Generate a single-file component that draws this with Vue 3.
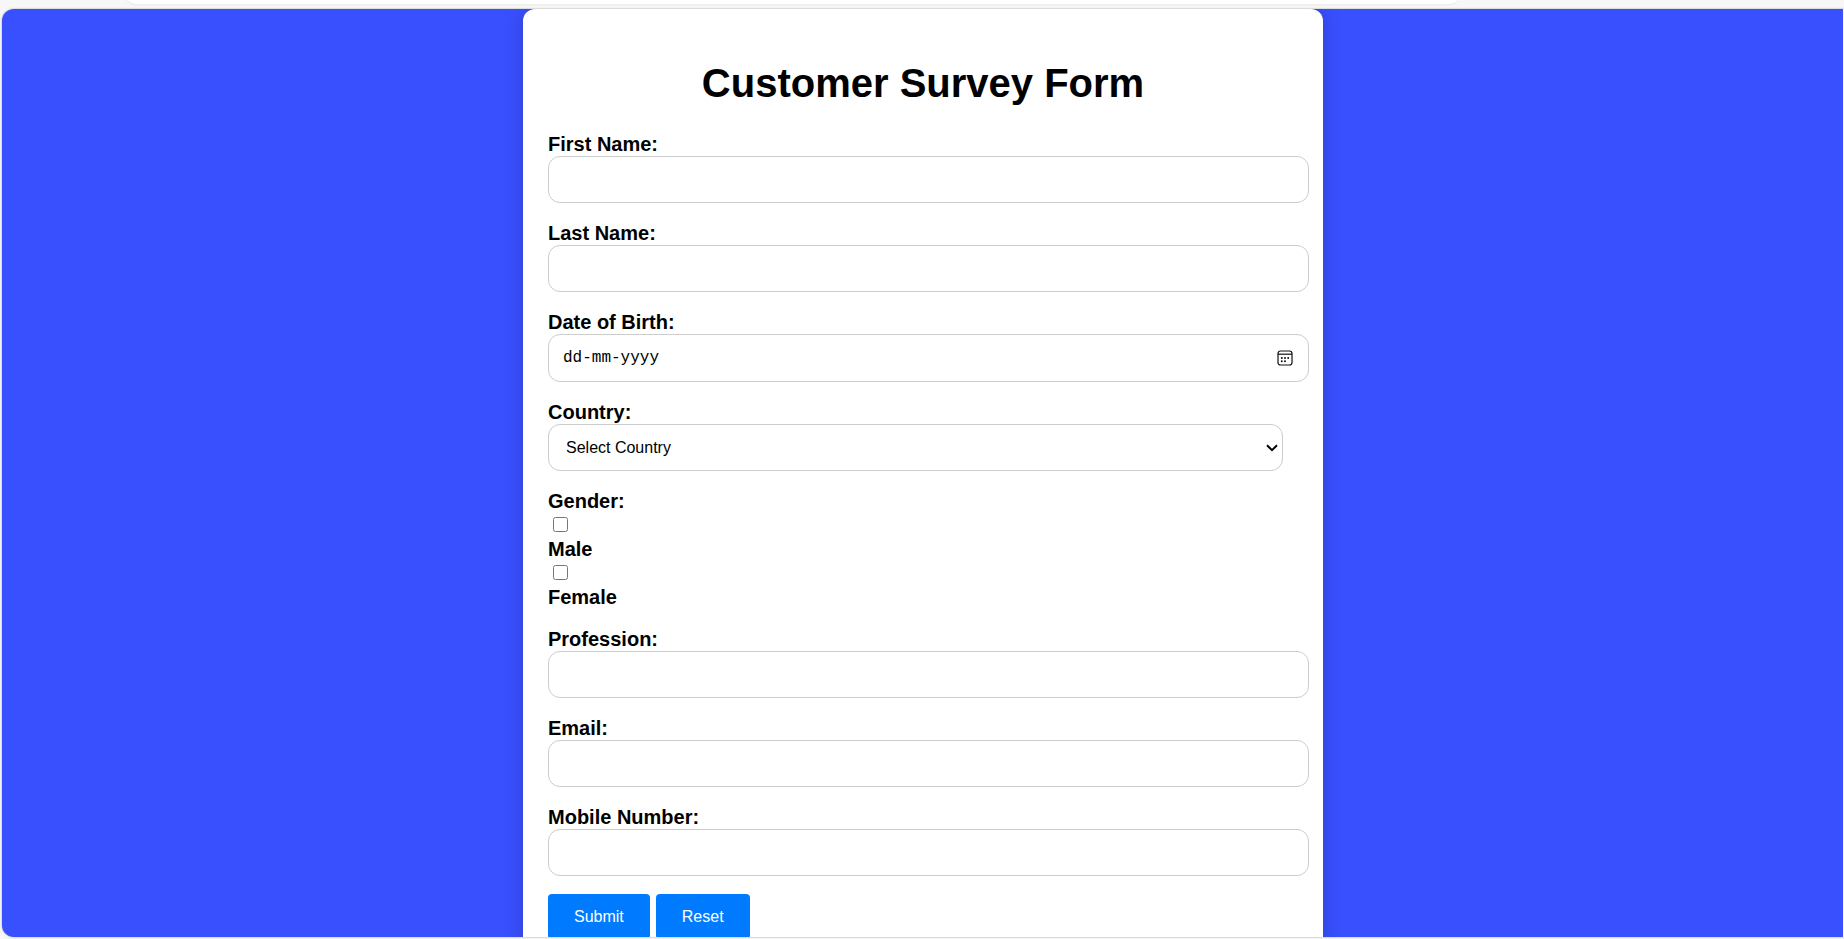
<script setup>
import { reactive } from 'vue'

const form = reactive({
  firstName: '',
  lastName: '',
  birth: '',
  country: '',
  male: false,
  female: false,
  profession: '',
  email: '',
  mobile: '',
})

const nameFields = [
  { key: 'firstName', label: 'First Name:', type: 'text' },
  { key: 'lastName', label: 'Last Name:', type: 'text' },
]
const contactFields = [
  { key: 'profession', label: 'Profession:', type: 'text' },
  { key: 'email', label: 'Email:', type: 'email' },
  { key: 'mobile', label: 'Mobile Number:', type: 'tel' },
]
const countries = ['India', 'United States', 'United Kingdom', 'Canada', 'Australia']

function reset() {
  for (const key in form) form[key] = typeof form[key] === 'boolean' ? false : ''
}
</script>

<template>
  <div class="shell">
    <div class="strip"><div class="bar"></div></div>
    <main class="view">
      <form class="card" @submit.prevent @reset.prevent="reset">
        <h1>Customer Survey Form</h1>

        <div v-for="f in nameFields" :key="f.key" class="field">
          <label :for="f.key">{{ f.label }}</label>
          <input :id="f.key" v-model="form[f.key]" class="box" :type="f.type" />
        </div>

        <div class="field">
          <label for="birth">Date of Birth:</label>
          <div class="date box">
            <input id="birth" v-model="form.birth" type="text" placeholder="dd-mm-yyyy" />
            <button type="button" class="picker" aria-label="Show date picker">
              <svg width="16" height="16" viewBox="0 0 16 16" fill="none" stroke="#111">
                <rect x="1" y="1" width="14" height="14" rx="2.5" stroke-width="1.2" />
                <path d="M1 4.2h14" stroke-width="1.2" />
                <g fill="#111" stroke="none">
                  <circle cx="4.8" cy="8" r="1" />
                  <circle cx="8" cy="8" r="1" />
                  <circle cx="11.2" cy="8" r="1" />
                  <circle cx="4.8" cy="11.2" r="1" />
                  <circle cx="8" cy="11.2" r="1" />
                </g>
              </svg>
            </button>
          </div>
        </div>

        <div class="field">
          <label for="country">Country:</label>
          <div class="choice">
            <select id="country" v-model="form.country" class="box">
              <option value="">Select Country</option>
              <option v-for="c in countries" :key="c">{{ c }}</option>
            </select>
            <svg class="chevron" width="12" height="8" viewBox="0 0 12 8" fill="none" stroke="#000" stroke-width="2">
              <path d="M1 1.2l5 5 5-5" />
            </svg>
          </div>
        </div>

        <div class="field" role="group" aria-labelledby="gender">
          <div id="gender" class="caption">Gender:</div>
          <div class="tick"><input id="male" v-model="form.male" type="checkbox" /></div>
          <label for="male">Male</label>
          <div class="tick"><input id="female" v-model="form.female" type="checkbox" /></div>
          <label for="female">Female</label>
        </div>

        <div v-for="f in contactFields" :key="f.key" class="field">
          <label :for="f.key">{{ f.label }}</label>
          <input :id="f.key" v-model="form[f.key]" class="box" :type="f.type" />
        </div>

        <div class="actions">
          <button type="submit">Submit</button>
          <button type="reset">Reset</button>
        </div>
      </form>
    </main>
  </div>
</template>

<style>
body {
  margin: 0;
  background: #f7f7f7;
}
</style>

<style scoped>
.shell {
  display: flex;
  flex-direction: column;
  box-sizing: border-box;
  height: 100vh;
  padding: 0 0 2px 2px;
  font-family: Arial, "Liberation Sans", sans-serif;
  color: #000;
}
.strip {
  display: flex;
  flex-direction: column;
  justify-content: flex-end;
  flex: none;
  height: 9px;
  overflow: hidden;
}
.bar {
  flex: none;
  width: calc(73% - 4px);
  height: 30px;
  margin: 0 0 3px 120px;
  border-bottom: 2px solid #efefef;
  border-radius: 0 0 16px 16px;
  background: #fff;
}
.view {
  flex: 1;
  min-height: 0;
  overflow: hidden;
  border-radius: 12px 0 0 12px;
  background: #3950ff;
  box-shadow: 0 0 2px rgba(0, 0, 0, 0.4), inset -1px 0 #f7f7f7;
}
.card {
  box-sizing: border-box;
  max-width: 800px;
  margin: 0 auto;
  padding: 51px 25px 25px;
  border-radius: 12px;
  background: #fff;
  box-shadow: 0 0 20px rgba(0, 0, 0, 0.2);
}
h1 {
  margin: 0 0 26px;
  font-size: 40px;
  line-height: 46px;
  text-align: center;
}
.field {
  margin-bottom: 18px;
}
label,
.caption {
  display: block;
  width: fit-content;
  font-size: 20px;
  font-weight: bold;
  line-height: 24px;
}
.box {
  display: block;
  box-sizing: content-box;
  width: 98%;
  height: 21px;
  margin: 0;
  padding: 12px;
  border: 1px solid #ccc;
  border-radius: 12px;
  background: #fff;
  color: #000;
  font-family: inherit;
  font-size: 16px;
}
.date {
  display: flex;
  align-items: center;
  height: 22px;
}
.date input {
  flex: 1;
  min-width: 0;
  padding: 0 2px;
  border: 0;
  background: none;
  font-family: "Liberation Mono", monospace;
  font-size: 16px;
  outline: none;
}
.date input::placeholder {
  color: #000;
  opacity: 1;
}
.picker {
  display: flex;
  padding: 0 3px;
  border: 0;
  background: none;
}
.choice {
  position: relative;
  width: 98%;
}
select.box {
  box-sizing: border-box;
  width: 100%;
  height: 47px;
  padding: 0 17px;
  appearance: none;
}
.chevron {
  position: absolute;
  top: 20px;
  right: 5px;
  pointer-events: none;
}
.tick {
  display: flex;
  align-items: flex-start;
  height: 20px;
  padding-top: 4px;
}
.tick input {
  width: 15px;
  height: 15px;
  margin: 0 5px;
}
.actions {
  display: flex;
  gap: 6px;
}
.actions button {
  padding: 12px 26px;
  border: 0;
  border-radius: 4px;
  background: #007bff;
  color: #fff;
  font-family: inherit;
  font-size: 16px;
  line-height: 21px;
  cursor: pointer;
}
</style>
